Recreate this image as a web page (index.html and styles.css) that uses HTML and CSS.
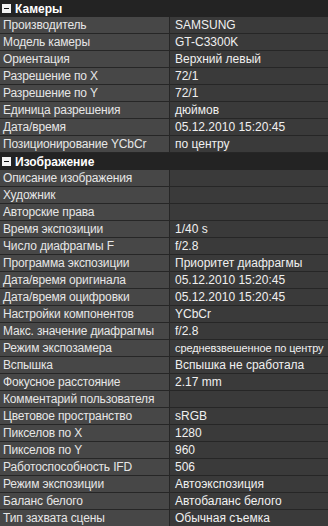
FILE: index.html
```html
<!DOCTYPE html>
<html>
<head>
    <title>Свойства EXIF</title>
    <link rel="stylesheet" href="styles.css">
</head>
<body>
    <div class="props">
        <div class="group">
            <span class="toggle"></span>
            <span class="group-title">Камеры</span>
        </div>
        <div class="row"><div class="name">Производитель</div><div class="value">SAMSUNG</div></div>
        <div class="row"><div class="name">Модель камеры</div><div class="value">GT-C3300K</div></div>
        <div class="row"><div class="name">Ориентация</div><div class="value">Верхний левый</div></div>
        <div class="row"><div class="name">Разрешение по X</div><div class="value">72/1</div></div>
        <div class="row"><div class="name">Разрешение по Y</div><div class="value">72/1</div></div>
        <div class="row"><div class="name">Единица разрешения</div><div class="value">дюймов</div></div>
        <div class="row"><div class="name">Дата/время</div><div class="value">05.12.2010 15:20:45</div></div>
        <div class="row"><div class="name">Позиционирование YCbCr</div><div class="value">по центру</div></div>

        <div class="group">
            <span class="toggle"></span>
            <span class="group-title">Изображение</span>
        </div>
        <div class="row"><div class="name">Описание изображения</div><div class="value"></div></div>
        <div class="row"><div class="name">Художник</div><div class="value"></div></div>
        <div class="row"><div class="name">Авторские права</div><div class="value"></div></div>
        <div class="row"><div class="name">Время экспозиции</div><div class="value">1/40 s</div></div>
        <div class="row"><div class="name">Число диафрагмы F</div><div class="value">f/2.8</div></div>
        <div class="row"><div class="name">Программа экспозиции</div><div class="value">Приоритет диафрагмы</div></div>
        <div class="row"><div class="name">Дата/время оригинала</div><div class="value">05.12.2010 15:20:45</div></div>
        <div class="row"><div class="name">Дата/время оцифровки</div><div class="value">05.12.2010 15:20:45</div></div>
        <div class="row"><div class="name">Настройки компонентов</div><div class="value">YCbCr</div></div>
        <div class="row"><div class="name">Макс. значение диафрагмы</div><div class="value">f/2.8</div></div>
        <div class="row"><div class="name">Режим экспозамера</div><div class="value narrow">средневзвешенное по центру</div></div>
        <div class="row"><div class="name">Вспышка</div><div class="value">Вспышка не сработала</div></div>
        <div class="row"><div class="name">Фокусное расстояние</div><div class="value">2.17 mm</div></div>
        <div class="row"><div class="name">Комментарий пользователя</div><div class="value"></div></div>
        <div class="row"><div class="name">Цветовое пространство</div><div class="value">sRGB</div></div>
        <div class="row"><div class="name">Пикселов по X</div><div class="value">1280</div></div>
        <div class="row"><div class="name">Пикселов по Y</div><div class="value">960</div></div>
        <div class="row"><div class="name">Работоспособность IFD</div><div class="value">506</div></div>
        <div class="row"><div class="name">Режим экспозиции</div><div class="value">Автоэкспозиция</div></div>
        <div class="row"><div class="name">Баланс белого</div><div class="value">Автобаланс белого</div></div>
        <div class="row"><div class="name">Тип захвата сцены</div><div class="value">Обычная съемка</div></div>
    </div>
</body>
</html>
```

FILE: styles.css
```css
body {
    margin: 0;
    background: #232323;
    font-family: "Liberation Sans", Arial, sans-serif;
    font-size: 12px;
    color: #e6e6e6;
}

.props {
    width: 328px;
}

.group {
    display: flex;
    align-items: center;
    height: 17px;
    background: #232323;
    padding-left: 2px;
}

.toggle {
    position: relative;
    width: 9px;
    height: 9px;
    background: #f4f4f4;
    margin-right: 4px;
}

/* minus sign inside the box */
.toggle::after {
    content: "";
    position: absolute;
    left: 2px;
    top: 4px;
    width: 5px;
    height: 1px;
    background: #111;
}

.group-title {
    font-weight: bold;
    color: #ffffff;
}

.row {
    display: grid;
    grid-template-columns: 170px 1fr;
    height: 16px;
    border-bottom: 1px solid #262626;
}

.name {
    background: #474747;
    border-right: 1px solid #262626;
    padding-left: 3px;
    line-height: 16px;
    white-space: nowrap;
    overflow: hidden;
    letter-spacing: -0.15px;
}

.value {
    background: #3a3a3a;
    padding-left: 5px;
    line-height: 16px;
    white-space: nowrap;
    overflow: hidden;
    color: #f0f0f0;
}

/* long value squeezed to fit the column */
.value.narrow {
    font-size: 11px;
    letter-spacing: -0.1px;
}
```
